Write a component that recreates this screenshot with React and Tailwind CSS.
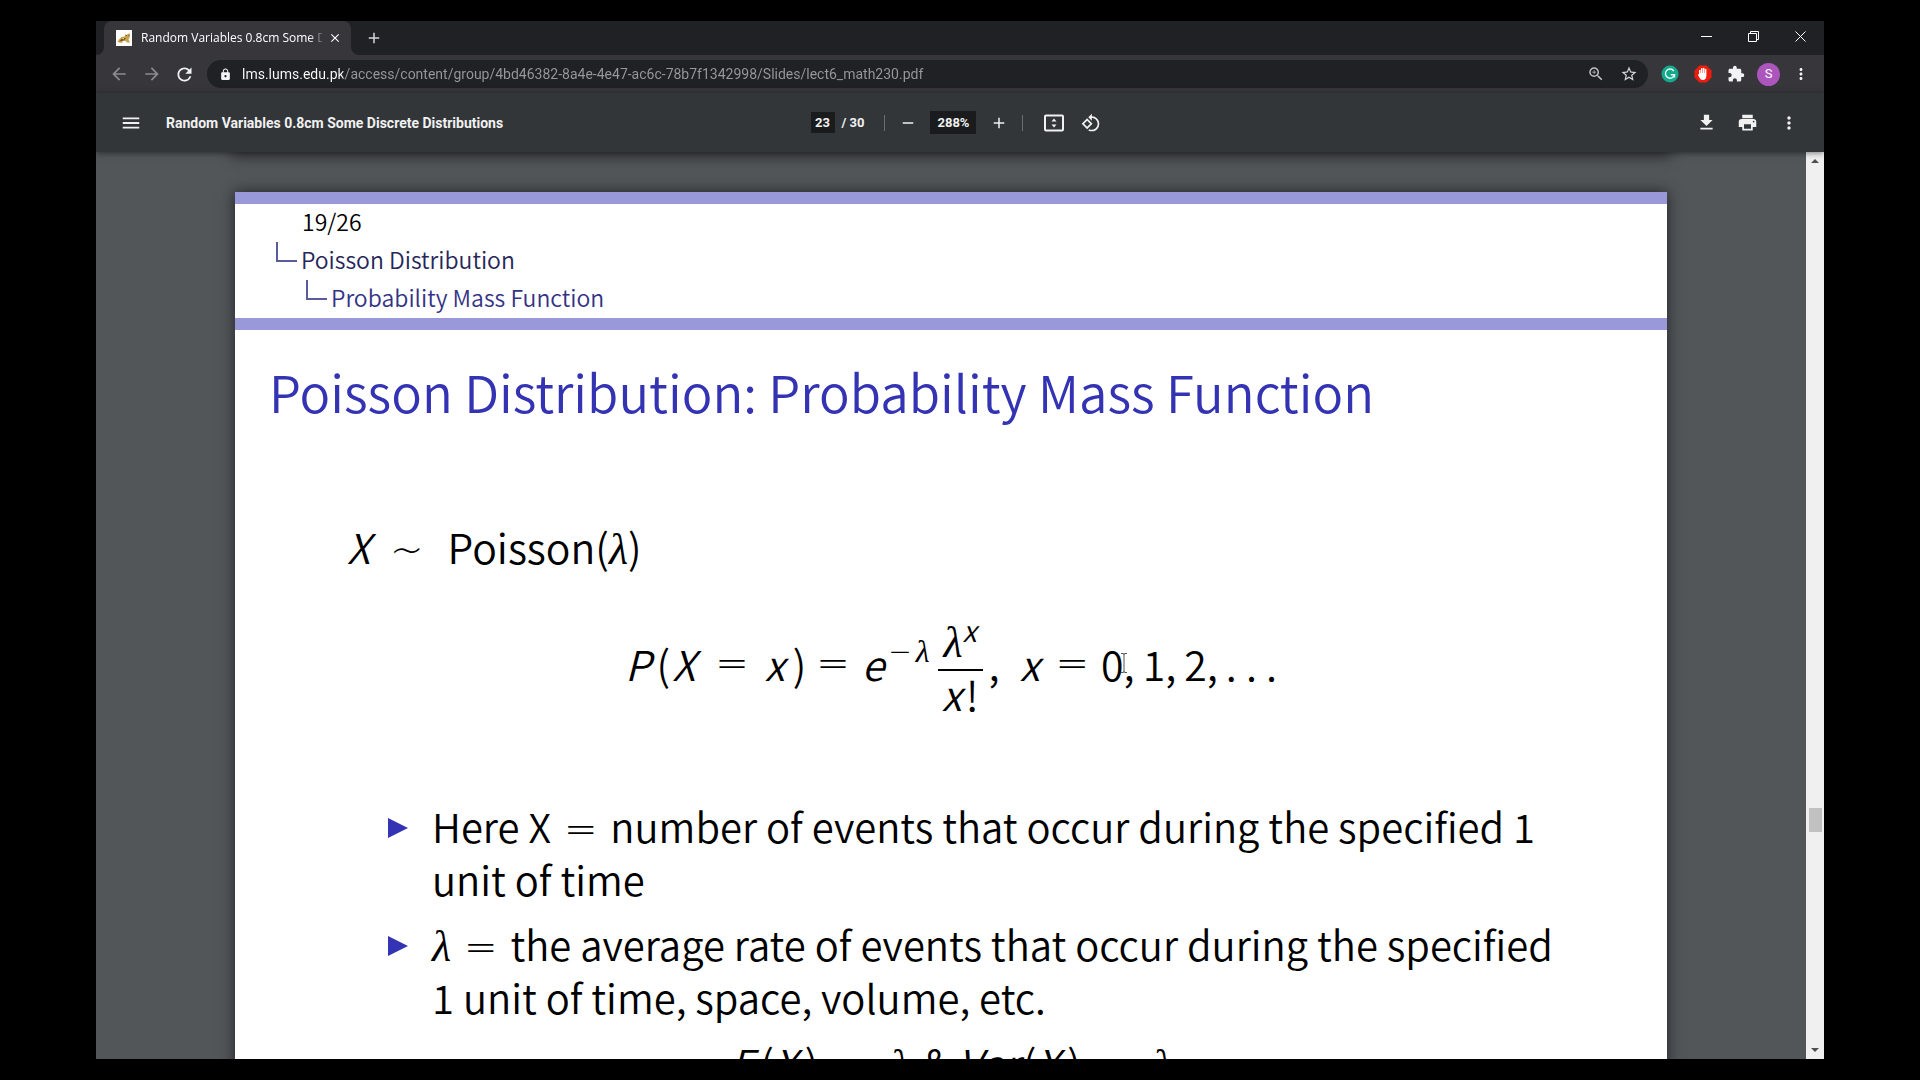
import React from "react";
import {
  MdArrowBack,
  MdArrowForward,
  MdRefresh,
  MdLock,
  MdExtension,
  MdStarBorder,
  MdZoomIn,
  MdMoreVert,
  MdPrint,
  MdMenu,
  MdAdd,
  MdRemove,
  MdClose,
  MdRotate90DegreesCcw,
} from "react-icons/md";

const SLIDE = "font-['Noto_Sans_CJK_JP','Noto_Sans',sans-serif] font-[350]";

function TabFlare({ flip }) {
  return (
    <svg
      viewBox="0 0 8 8"
      className={
        flip
          ? "absolute bottom-0 left-full size-2 -scale-x-100 fill-[#37373b]"
          : "absolute right-full bottom-0 size-2 fill-[#37373b]"
      }
    >
      <path d="M8 0v8H0A8 8 0 0 0 8 0Z" />
    </svg>
  );
}

function Favicon() {
  return (
    <svg viewBox="0 0 16 16" className="size-4 shrink-0">
      <rect width="16" height="16" fill="#fff" />
      <path d="M1.500 12 3 9.500l2.500-2.500 3-.5L9.500 4l1 1L13.500 3l.5 3.500-1.500 3 1.500 3h-3L9.500 11 7 10.500l-1 2.500Z" fill="#c9a24d" />
      <path d="M3 11.500 5.500 9 8 8l2 .5L8 10.500ZM10 5h1v1h-1ZM12.500 5h1v1h-1Z" fill="#7b5a24" />
      <path d="M6 8.500 8 8l-.5 1.500Z" fill="#f5e3b2" />
    </svg>
  );
}

function TabStrip() {
  return (
    <header className="flex h-[34px] shrink-0 bg-[#202124] pl-2 text-white">
      <div className="relative flex w-[247px] items-center rounded-t-lg bg-[#37373b] pr-[9px] pl-3">
        <TabFlare />
        <TabFlare flip />
        <Favicon />
        <span className="ml-[9px] w-[181px] overflow-hidden font-['Open_Sans','Noto_Sans',sans-serif] text-[12px] leading-5 whitespace-nowrap [mask-image:linear-gradient(to_right,black_168px,transparent_184px)]">
          Random Variables 0.8cm Some Discrete Distributions
        </span>
        <button aria-label="Close tab" className="ml-auto">
          <MdClose className="size-[14px]" />
        </button>
      </div>
      <button aria-label="New tab" className="ml-[14px] text-[#d5d6d8]">
        <MdAdd className="size-[18px]" />
      </button>
      <div className="ml-auto flex pb-1">
        <button aria-label="Minimize" className="grid w-[47px] place-items-center">
          <svg viewBox="0 0 11 11" className="size-[11px]" stroke="currentColor">
            <path d="M0 5.500h11" />
          </svg>
        </button>
        <button aria-label="Restore" className="grid w-[47px] place-items-center">
          <svg viewBox="0 0 11 11" className="size-[11px]" fill="none" stroke="currentColor">
            <path d="M.5 2.500h8v8h-8ZM2.500 2.500v-2h8v8h-2" />
          </svg>
        </button>
        <button aria-label="Close" className="grid w-[47px] place-items-center">
          <svg viewBox="0 0 11 11" className="size-[11px]" stroke="currentColor">
            <path d="M.5.5l10 10M10.500.5l-10 10" />
          </svg>
        </button>
      </div>
    </header>
  );
}

function AddressBar() {
  return (
    <nav className="flex h-[38px] shrink-0 items-center bg-[#37373b] pr-[14px] pl-[13px] text-[#f1f3f4]">
      <button aria-label="Back" className="text-[#8b8c8f]">
        <MdArrowBack className="size-5" />
      </button>
      <button aria-label="Forward" className="ml-[13px] text-[#8b8c8f]">
        <MdArrowForward className="size-5" />
      </button>
      <button aria-label="Reload" className="ml-3">
        <MdRefresh className="size-[21px]" />
      </button>
      <div className="ml-3 flex h-7 flex-1 items-center rounded-full bg-[#202124] pr-[10px] pl-3">
        <MdLock className="size-[13px] shrink-0" />
        <input
          aria-label="Address"
          defaultValue="lms.lums.edu.pk/access/content/group/4bd46382-8a4e-4e47-ac6c-78b7f1342998/Slides/lect6_math230.pdf"
          className="ml-[10px] h-6 min-w-0 flex-1 bg-[linear-gradient(to_right,white_101px,#97999d_101px)] bg-clip-text font-['Roboto',sans-serif] text-[14px] text-transparent outline-none"
        />
        <button aria-label="Zoom" className="text-[#bdc1c6]">
          <MdZoomIn className="size-[18px]" />
        </button>
        <button aria-label="Bookmark" className="ml-[15px] text-[#d5d7da]">
          <MdStarBorder className="size-[18px]" />
        </button>
      </div>
      <button aria-label="Grammarly" className="ml-[13px]">
        <svg viewBox="0 0 18 18" className="size-[18px]" fill="none">
          <circle cx="9" cy="9" r="8.500" fill="#15a98c" />
          <path d="M12.800 6A4.600 4.600 0 1 0 13.500 9.800H9.800M13.500 9.800v2.700" stroke="#e7fffa" strokeWidth="1.400" />
        </svg>
      </button>
      <button aria-label="Ad blocker" className="ml-[15px]">
        <svg viewBox="0 0 18 18" className="size-[18px]">
          <path d="M5.500.5h7l5 5v7l-5 5h-7l-5-5v-7Z" fill="#ee1c0c" />
          <path
            d="M5 9.500V5.300q.9-.9 1.500 0V8h.4V3.600q.8-1 1.600 0V8h.4V3.200q.8-1 1.600 0V8h.4V4.200q.8-.9 1.500 0V11q-.2 4-3.600 4-2.400 0-3.300-2.200L4 10q0-1.300 1-.5Z"
            fill="#fff"
          />
        </svg>
      </button>
      <button aria-label="Extensions" className="ml-[15px]">
        <MdExtension className="size-[18px]" />
      </button>
      <button
        aria-label="Profile"
        className="ml-3 grid size-[23px] place-items-center rounded-full bg-[#ab55bd] font-['Roboto',sans-serif] text-[13px] leading-4 text-white"
      >
        S
      </button>
      <button aria-label="Menu" className="ml-3">
        <MdMoreVert className="size-[18px]" />
      </button>
    </nav>
  );
}

function PdfToolbar() {
  return (
    <div className="relative z-10 grid h-[59px] shrink-0 grid-cols-[1fr_auto_1fr] items-center bg-[#323639] pr-[25px] pl-6 font-['Roboto',sans-serif] text-[13px] font-bold text-[#f1f1f1] shadow-[0_1px_6px_rgba(0,0,0,0.5)]">
      <div className="flex items-center">
        <button aria-label="Sidebar">
          <MdMenu className="size-[22px]" />
        </button>
        <h1 className="ml-6 text-[14px] leading-5 whitespace-nowrap">
          Random Variables 0.8cm Some Discrete Distributions
        </h1>
      </div>
      <div className="flex items-center pr-[7px]">
        <input
          aria-label="Page number"
          defaultValue="23"
          className="h-[21px] w-6 bg-[#191b1c] text-center outline-none"
        />
        <span className="ml-[7px] leading-5">/ 30</span>
        <i className="ml-5 h-4 w-px bg-[#6b6e70]" />
        <button aria-label="Zoom out" className="ml-[14px]">
          <MdRemove className="size-[18px]" />
        </button>
        <input
          aria-label="Zoom level"
          defaultValue="288%"
          className="ml-[13px] h-[23px] w-[46px] bg-[#191b1c] text-center outline-none"
        />
        <button aria-label="Zoom in" className="ml-[14px]">
          <MdAdd className="size-[18px]" />
        </button>
        <i className="ml-[14px] h-4 w-px bg-[#6b6e70]" />
        <button aria-label="Fit to page" className="ml-[21px]">
          <svg viewBox="0 0 20 18" className="h-[18px] w-5">
            <rect x="1" y="1.500" width="18" height="15" rx="1" fill="none" stroke="currentColor" strokeWidth="2" />
            <path d="M10 4.500 12.500 7.500h-5ZM10 13.500 7.500 10.500h5Z" fill="currentColor" />
          </svg>
        </button>
        <button aria-label="Rotate" className="ml-[17px]">
          <MdRotate90DegreesCcw className="size-5" />
        </button>
      </div>
      <div className="flex items-center justify-end">
        <button aria-label="Download">
          <svg viewBox="0 0 24 24" fill="currentColor" className="size-[21px]">
            <path d="M19 9h-4V3H9v6H5l7 7 7-7ZM5 18v2h14v-2Z" />
          </svg>
        </button>
        <button aria-label="Print" className="ml-5">
          <MdPrint className="size-[21px]" />
        </button>
        <button aria-label="More" className="ml-[21px]">
          <MdMoreVert className="size-5" />
        </button>
      </div>
    </div>
  );
}

function Lambda() {
  return <i className="font-['Liberation_Serif',serif] text-[44px] leading-none font-normal">λ</i>;
}

function Rel({ children = "=", className = "" }) {
  return (
    <span className={`font-['DejaVu_Sans',sans-serif] text-[40px] leading-none font-extralight ${className}`}>
      {children}
    </span>
  );
}

function Branch() {
  return <span className="mb-[14px] h-5 w-[21px] shrink-0 self-end border-b-2 border-l-2 border-[#5a5a9c]" />;
}

function Bullet({ children }) {
  return (
    <li className="flex gap-6">
      <svg viewBox="0 0 20 20" className="mt-[18px] size-5 shrink-0 fill-[#3333b3]">
        <path d="M0 0 20 10 0 20Z" />
      </svg>
      <p className="leading-[53px] whitespace-nowrap">{children}</p>
    </li>
  );
}

function Formula() {
  return (
    <div className="mt-[34px] flex items-center justify-center whitespace-nowrap">
      <span className="italic">P</span>
      <span className="ml-1.5">(</span>
      <span className="ml-0.5 italic">X</span>
      <Rel className="ml-5" />
      <span className="ml-4 italic">x</span>
      <span className="ml-2">)</span>
      <Rel className="ml-2.5" />
      <span className="ml-3 italic">e</span>
      <span className="mb-6 ml-1 flex items-center">
        <span className="font-['DejaVu_Sans',sans-serif] text-[28px] font-extralight">−</span>
        <i className="ml-1 font-['Liberation_Serif',serif] text-[32px] font-normal">λ</i>
      </span>
      <span className="ml-2 flex flex-col items-center pt-[14px]">
        <span className="flex h-12 items-start leading-none">
          <Lambda />
          <sup className="top-0 -mt-1.5 text-[29px] leading-none italic">x</sup>
        </span>
        <span className="h-0.5 w-[45px] bg-black" />
        <span className="flex h-12 items-start leading-[44px]">
          <i>x</i>
          <span className="ml-1">!</span>
        </span>
      </span>
      <span className="ml-1.5">,</span>
      <span className="ml-5 italic">x</span>
      <Rel className="ml-4" />
      <span className="relative ml-3">
        0
        <svg viewBox="0 0 8 20" className="absolute top-1/2 left-full -ml-1 h-5 w-2 -translate-y-1/2" fill="none" stroke="#555">
          <path d="M1 .5h2q1 0 1 1 0-1 1-1h2M4 1v18M1 19.500h2q1 0 1-1 0 1 1 1h2" />
        </svg>
      </span>
      <span>,</span>
      <span className="ml-2">1,</span>
      <span className="ml-2">2,</span>
      <span className="ml-2">. . .</span>
    </div>
  );
}

function Slide() {
  return (
    <article
      className={`${SLIDE} mx-auto h-[1080px] w-full max-w-[1432px] bg-white text-[41px] leading-[53px] text-black shadow-[0_0_14px_rgba(0,0,0,0.6)]`}
    >
      <div className="border-y-[12px] border-[#9999d9] pl-[41px] text-[23px] leading-[34px]">
        <p className="pb-1 pl-[26px]">19/26</p>
        <p className="flex gap-1 pb-1 text-[#262659]">
          <Branch />
          Poisson Distribution
        </p>
        <p className="flex gap-1 pb-1 pl-[30px] text-[#333386]">
          <Branch />
          Probability Mass Function
        </p>
      </div>
      <h2 className="pt-8 pl-[34px] text-[51px] leading-[58px] text-[#3333b3]">
        Poisson Distribution: Probability Mass Function
      </h2>
      <p className="mt-[100px] flex items-baseline pl-[112px]">
        <span className="italic">X</span>
        <Rel className="ml-5">~</Rel>
        <span className="ml-6">Poisson(</span>
        <Lambda />)
      </p>
      <Formula />
      <ul className="mt-[81px] space-y-3 pl-[153px] text-[40px]">
        <Bullet>
          Here X <Rel className="mx-1" /> number of events that occur during the specified 1<br />
          unit of time
        </Bullet>
        <Bullet>
          <Lambda /> <Rel className="mx-1" /> the average rate of events that occur during the specified
          <br />1 unit of time, space, volume, etc.
        </Bullet>
      </ul>
      <p className="mt-3 text-center whitespace-nowrap">
        <i className="mr-1.5">E</i>(<i className="mr-2">X</i>) <Rel className="mx-2.5" /> <Lambda />{" "}
        <span className="ml-1">&amp;</span>
        <i className="mr-1 ml-2">Var</i>(<i className="mr-2">X</i>) <Rel className="mx-2.5" /> <Lambda />
      </p>
    </article>
  );
}

function Scrollbar() {
  return (
    <div className="flex w-[18px] shrink-0 flex-col items-center bg-[#f0f0f0]">
      <button aria-label="Scroll up" className="grid h-[18px] w-full place-items-center">
        <svg viewBox="0 0 8 4" className="h-1 w-2 fill-[#505050]">
          <path d="M4 0l4 4H0Z" />
        </svg>
      </button>
      <div className="flex-[638]" />
      <div className="h-6 w-[13px] bg-[#c1c1c1]" />
      <div className="flex-[209]" />
      <button aria-label="Scroll down" className="grid h-[18px] w-full place-items-center">
        <svg viewBox="0 0 8 4" className="h-1 w-2 fill-[#505050]">
          <path d="M0 0h8L4 4Z" />
        </svg>
      </button>
    </div>
  );
}

export default function App() {
  return (
    <div className="h-screen bg-black px-24 py-[21px]">
      <div className="flex h-full flex-col overflow-hidden">
        <TabStrip />
        <AddressBar />
        <PdfToolbar />
        <div className="flex min-h-0 flex-1 bg-[#525659]">
          <main className="min-w-0 flex-1 overflow-hidden">
            <div className="mx-auto mb-10 h-0 w-full max-w-[1432px] shadow-[0_0_14px_4px_rgba(0,0,0,0.6)]" />
            <Slide />
          </main>
          <Scrollbar />
        </div>
      </div>
    </div>
  );
}
